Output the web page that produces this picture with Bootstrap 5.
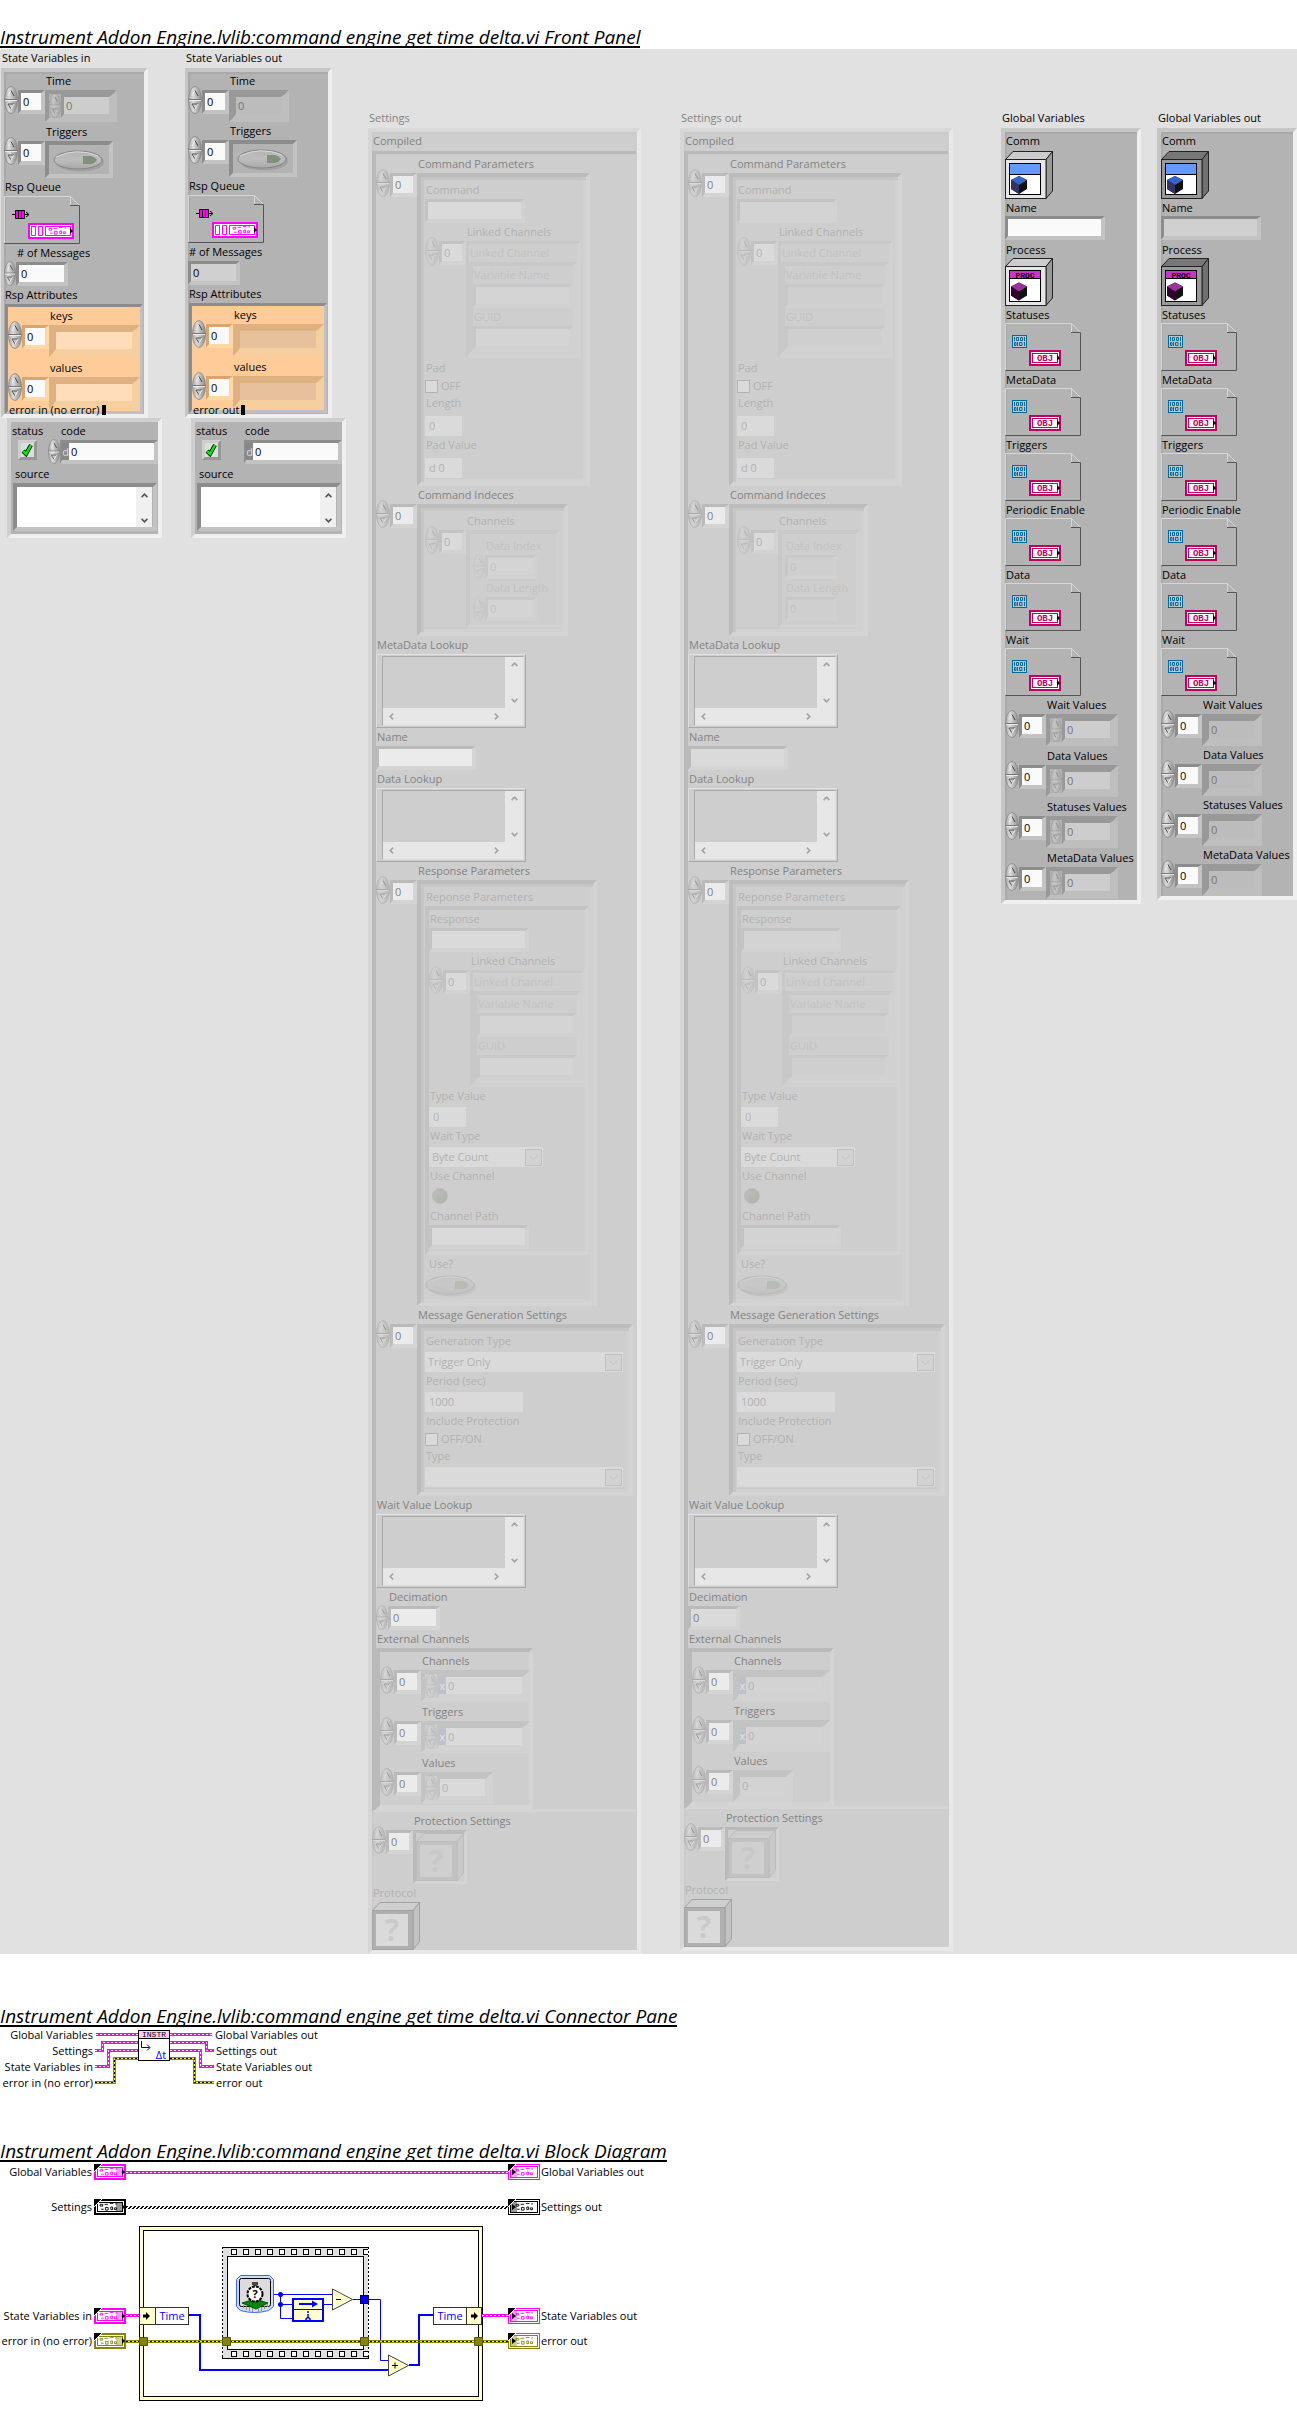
<!DOCTYPE html>
<html lang="en">
<head>
<meta charset="utf-8">
<meta name="viewport" content="width=device-width, initial-scale=1">
<title>command engine get time delta.vi</title>
<link href="https://cdn.jsdelivr.net/npm/bootstrap@5.3.0/dist/css/bootstrap.min.css" rel="stylesheet">
<style>
body{font-family:"Open Sans","Noto Sans",sans-serif;font-size:11px;line-height:18px;color:#000;background:#fff}
.vi-title{font-style:italic;font-size:19px;font-weight:400;line-height:18px;height:20px;border-bottom:2px solid #000;white-space:nowrap;margin:0;width:max-content}
.vi-title.first{margin-top:28px}
.vi-title.second{margin-top:53px}
.vi-title.third{margin-top:45px}
/* front panel */
.fpanel{position:relative;display:grid;grid-template-columns:184fr 184fr 312fr 321fr 156fr 140fr;background:#e1e1e1;margin-top:1px;align-items:start}
.fpanel>section{min-width:0}
.ps-col{padding-left:1px}
.low{padding-top:60px}
.cap{display:block;height:18px;line-height:18px;white-space:nowrap;margin:0;color:var(--ink);padding-left:1px}
.ind-cap{padding-left:42px}
.spin-cap{padding-left:13px}
/* palettes: one per nesting depth */
.pal{--ink:#000;--box:#fafafa;--ibox:#d0d0d0;--lo:#8c8c8c;--hi:#c3c3c3;--sp:1;--face:#e6e6e6;--edge:#333}
.pal-in{--ink:#777;--box:#cdcdcd;--ibox:#bcbcbc;--lo:#999;--hi:#bebebe;--sp:.4}
.pal-or{--lo:#d9a46f;--hi:#ffd8a4;--box:#fafafa}
.pal-or-in{--box:#ffdcba;--ibox:#e6c19b;--lo:#dfb080;--hi:#f6cf9f}
.dim{--ink:#838383;--box:#ebebeb;--ibox:#dadada;--lo:#bababa;--hi:#d4d4d4;--sp:.4}
.dim1{--ink:#b2b2b2;--box:#dadada;--ibox:#d3d3d3;--lo:#c3c3c3;--hi:#d2d2d2;--sp:.2}
.dim2{--ink:#c2c2c2;--box:#d4d4d4;--ibox:#cfcfcf;--lo:#c8c8c8;--hi:#d1d1d1;--sp:.1}
.cluster{border:4px solid;border-color:#c6c6c6 #efefef #efefef #c6c6c6;background:#b3b3b3;box-shadow:inset 2px 2px #a9a9a9}
.cluster.state{border-left-width:3px;width:147px;height:350px}
.cluster.setg{width:273px;background:#cecece;border-color:#d8d8d8 #e8e8e8 #e8e8e8 #d6d6d6;box-shadow:inset 2px 2px #cacaca}
.cluster.glob{width:140px}
.cluster.err{width:155px;height:120px;margin-left:6px;box-shadow:none;border-color:#cfcfcf #efefef #efefef #cfcfcf}
.bev{border:4px solid;border-color:var(--lo) var(--hi) var(--hi) var(--lo)}
.bev3{border-width:3px 4px 4px 3px}
.bev-3{border-width:3px}
.dbl{border:4px solid;border-color:#bcbcbc #d4d4d4 #d4d4d4 #bcbcbc;box-shadow:inset 3px 3px #c6c6c6,inset -3px -3px #d1d1d1;padding:4px}
.fc{display:block;flex:none;font:inherit;line-height:17px;height:24px;border:solid;border-width:3px 4px 4px 3px;border-color:var(--lo) var(--hi) var(--hi) var(--lo);border-radius:0;background:var(--box);color:var(--ink);padding:0 0 0 2px;resize:none}
.fc.ro{background:var(--ibox)}
.w-ix{width:27px}.w-num{width:52px}.w-txt{width:100px}.w-ext{width:80px}.w-code{width:89px}
.flat{display:block;border:0;height:20px;margin-top:2px;padding:0 0 0 4px;background:var(--box);color:var(--ink);line-height:20px}
.low2{margin-top:4px}
.w-37{width:37px}.w-98{width:98px}
.unit{flex:none;display:flex;align-items:center;justify-content:center;height:24px;border:solid;border-width:3px 0 4px 2px;border-color:var(--lo) transparent var(--hi) var(--lo);width:9px;background:#bfc1c8;color:#e4e4e4;line-height:12px}
.unit+.fc{border-left:0}
.unit.dk{background:#888;color:#ddd}
.spb{border:0;background:none;padding:0;display:block;width:14px;height:28px;margin-top:-4px;opacity:var(--sp);flex:none}
.spb.sm{width:12px;height:25px;margin-top:-1px}
.icn{display:block}
.rowgap{margin-bottom:1px}
.orange{background:#fc9;margin-left:1px;width:138px;border:3px solid;border-color:#8c8c8c #c0c0c0 #c0c0c0 #8c8c8c;height:110px}
.rowgap-or{height:52px}
.w-or{width:83px}
.latch{border:0;background:none;padding:0;display:block;width:52px;height:24px}
.latch-f{width:68px;height:37px;display:flex;align-items:center;justify-content:center}
.use-l{opacity:.3;margin-bottom:1px}
.led{display:block;width:16px;height:16px;margin:3px;padding:0;border:1px solid #bbb;border-radius:50%;background:linear-gradient(135deg,#bcc0bb,#adb2aa)}
.err-cap{position:relative;z-index:1;margin-top:-17px;height:17px;padding-left:8px;display:flex;align-items:center}
.cursor{width:4px;height:10px;background:#000;margin-left:2px}
.chk{border:3px solid;border-color:#cecece #969696 #969696 #cecece;background:#ddd;width:19px;height:20px;padding:0;display:block;margin-left:7px}
.nosp{width:12px}
.mt-px{margin-top:1px}
.src{display:flex;width:144px;height:48px;margin-left:2px}
.src textarea{flex:1;min-width:0;border:0;resize:none;padding:0;background:#fff}
.src .sb{width:16px;background:#f0f0f0;display:flex;flex-direction:column;justify-content:space-between;align-items:center;padding:4px 0 2px;margin-right:1px}
.lookup{width:150px;height:74px;border:1px solid;border-color:#e2e2e2 #a9a9a9 #a9a9a9 #dedede;padding:1px 1px 1px 5px}
.lk-in{display:grid;grid-template-columns:1fr 18px;grid-template-rows:1fr 17px;height:100%;border:1px solid;border-color:#a9a9a9 #ddd #ddd #a9a9a9;background:#e7e7e7}
.lk-in textarea{border:0;background:#cecece;resize:none;padding:0;min-width:0;width:100%;height:100%}
.lk-in .v{display:flex;flex-direction:column;justify-content:space-between;align-items:center;padding:3px 0 3px}
.lk-in .h{display:flex;justify-content:space-between;align-items:center;padding:0 4px}
.cbx{width:13px;height:13px;border:1px solid #b4b4b4;background:#dadada;appearance:none;margin:1px 0 0;border-radius:0}
.cb-row{display:flex;gap:3px;height:17px;align-items:center;color:var(--ink);margin:0;line-height:17px}
.cap-gap{margin-top:1px}
.selw{display:grid;height:20px;margin-top:2px;align-items:center}
.selw>*{grid-area:1/1}
.selw select{appearance:none;border:0;border-radius:0;background:var(--box);color:var(--ink);font:inherit;height:20px;padding:0 0 0 3px;opacity:1;width:100%}
.selw svg{justify-self:end;margin-right:1px;pointer-events:none;stroke:#c0c0c0;fill:#d2d2d2}
.w-114{width:114px}.w-198{width:198px}
.cmds{width:173px}.msgs{width:216px;padding-bottom:5px}.resp{width:180px}
.idxs{width:94px;padding:3px}
.idxs.slim{width:82px}
.pb-use{padding-bottom:2px}
.compiled{border-width:3px 0 3px 4px;border-style:solid;border-color:#bababa #d4d4d4 #d4d4d4 #bababa;margin-right:1px}
.pt-px{padding-top:1px}
.ext{width:157px}
.ext.slim{width:146px}
.dg{display:block;max-width:none}
.gl .cap{height:17px;line-height:17px}
.gl .ind-cap,.gl .top-cap{height:18px;line-height:18px}
.mb-cap,.top-cap{margin-bottom:1px}
.mb-cube{margin-bottom:2px}
.cube-dim{--face:#b0b0b0;--edge:#a2a2a2;--scr:#dadada;--q:#cacaca;--top:#cfcfcf;--side:#c2c2c2}
.cube-dim2{--face:#c2c2c2;--edge:#bcbcbc;--scr:#cfcfcf;--q:#c8c8c8;--top:#cdcdcd;--side:#c9c9c9}
.cube-in{--face:#e6e6e6;--edge:#222;--top:#ccc;--side:#999}
.cube-out{--face:#999;--edge:#222;--top:#777;--side:#707070}
.bl{--c1:#36c;--c2:#336}
.pu{--c1:#939;--c2:#303}
</style>
<script src="https://cdn.jsdelivr.net/npm/bootstrap@5.3.0/dist/js/bootstrap.bundle.min.js"></script>
</head>
<body>
<svg width="0" height="0" class="position-absolute" aria-hidden="true">
<defs>
<linearGradient id="metal" x1="0" x2="1" y1="0" y2="0"><stop offset="0" stop-color="#a4a4a4"/><stop offset=".35" stop-color="#dcdcdc"/><stop offset="1" stop-color="#8a8a8a"/></linearGradient>
<linearGradient id="pill" x1="0" x2="0" y1="0" y2="1"><stop offset="0" stop-color="#b4b4b4"/><stop offset=".5" stop-color="#bdbdbd"/><stop offset="1" stop-color="#a8a8a8"/></linearGradient>
<symbol id="spin" viewBox="0 0 14 28" preserveAspectRatio="none"><ellipse cx="7" cy="14" rx="6.5" ry="13.5" fill="url(#metal)" stroke="#888" stroke-width=".8"/><path d="M0.5 13.5h13" stroke="#777"/><path d="M1 14.6h12" stroke="#eee"/><path d="M4 10L7 4.5" stroke="#eee" fill="none"/><path d="M7 4.5L10 10" stroke="#444" fill="none"/><path d="M10 18H4L7 23" stroke="#555" fill="none"/><path d="M7 23L10 18" stroke="#eee"/></symbol>
<symbol id="latch" viewBox="0 0 52 24"><ellipse cx="27" cy="14" rx="24" ry="9.5" fill="#8d8d8d" opacity=".5"/><ellipse cx="25" cy="12" rx="24" ry="9" fill="url(#pill)" stroke="#858585"/><path d="M3 9Q24-1 45 8" stroke="#d8d8d8" fill="none"/><path d="M30 8h8q4 1 6 4-2 3-6 4h-8z" fill="#80917a"/></symbol>
<symbol id="chev" viewBox="0 0 17 17"><rect x=".5" y=".5" width="16" height="16"/><path d="M5 7l3.500 3.500L12 7" fill="none"/></symbol>
<symbol id="cube" viewBox="0 0 48 48"><path d="M.5 8.500L8 .5H47.500L41 8.500z" fill="var(--top)" stroke="var(--edge)"/><path d="M41 8.500L47.500.5V40L41 47.500z" fill="var(--side)" stroke="var(--edge)"/><rect x=".5" y="8.500" width="40.500" height="39" fill="var(--face)" stroke="var(--edge)"/></symbol>
<symbol id="box3" viewBox="0 0 16 18"><path d="M8 0l8 4v9l-8 5-8-5V4z" fill="#111"/><path d="M8 0l8 4-8 5-8-5z" fill="var(--c1)"/><path d="M0 4l8 5v9l-8-5z" fill="var(--c2)"/></symbol>
<symbol id="sheet" viewBox="0 0 76 48"><path d="M.5 47V.5H66.500L75.500 9.500" fill="none" stroke="#d6d6d6"/><path d="M66.500.5V9" stroke="#d6d6d6" fill="none"/><path d="M66 9.500H75.500V47.500H.5" fill="none" stroke="#555"/></symbol>
<symbol id="bits" viewBox="0 0 15 13"><rect x=".5" y=".5" width="14" height="12" fill="#b9c6cc" stroke="#06699c"/><path d="M2.500 2v4M12.500 2v4M5.500 7v4M12.500 7v4" stroke="#06699c"/><path d="M4.500 2.500h2v3h-2zM8.500 2.500h2v3h-2zM2.500 7.500h1.500v3h-1.500zM7.500 7.500h2.500v3h-2.500z" fill="none" stroke="#06699c"/></symbol>
<symbol id="glyphs" viewBox="0 0 22 9"><path d="M1 1.500h3v2h-3zM6 1.500h4M12 .5h4M13 4.500h2v3h-2zM17 5.500h2.500v2h-2.500zM2 7h3M7 5h3v3h-3zM18 1h2" fill="none" stroke="currentColor"/></symbol>
<symbol id="tin" viewBox="0 0 32 16"><rect width="32" height="16" fill="currentColor"/><rect x="2.500" y="2.500" width="27" height="11" fill="#fff" stroke="#fff"/><rect x="3.500" y="3.500" width="25" height="9" fill="#fff" stroke="currentColor"/><use href="#glyphs" x="5" y="4" width="20" height="8"/><rect x="22" y="3" width="7" height="10" fill="currentColor" opacity=".4"/><path d="M28 5l3 3-3 3z" fill="#000"/><path d="M0 0h8L0 8z" fill="#000"/><path d="M8 0L0 8" stroke="#fff"/></symbol>
<symbol id="tout" viewBox="0 0 32 16"><rect x=".5" y=".5" width="31" height="15" fill="#fff" stroke="currentColor"/><rect x="2.500" y="2.500" width="27" height="11" fill="#fff" stroke="currentColor"/><use href="#glyphs" x="7" y="4" width="20" height="8"/><rect x="3" y="3" width="6" height="10" fill="currentColor" opacity=".4"/><path d="M4 5l4 3-4 3z" fill="#000"/><path d="M0 0h8L0 8z" fill="#000"/><path d="M8 0L0 8" stroke="#fff"/></symbol>
</defs>
</svg>

<h2 class="vi-title first">Instrument Addon Engine.lvlib:command engine get time delta.vi Front Panel</h2>
<main class="fpanel" id="front"></main>

<h2 class="vi-title second">Instrument Addon Engine.lvlib:command engine get time delta.vi Connector Pane</h2>
<svg class="dg" width="664" height="70" viewBox="0 2029 664 70" role="img" aria-label="Connector pane">
<g fill="none" stroke-width="3">
<path d="M96 2036.500H138M95 2052.500H102.500V2044.500H138M95 2068.500H108.500V2052.500H138M170 2036.500H212M170 2044.500H206.500V2052.500H214M170 2052.500H200.500V2068.500H214" stroke="#f0f"/>
<path d="M96 2036.500H138M95 2052.500H102.500V2044.500H138M95 2068.500H108.500V2052.500H138M170 2036.500H212M170 2044.500H206.500V2052.500H214M170 2052.500H200.500V2068.500H214" stroke="#fff" stroke-width="1" stroke-dasharray="2 2"/>
<path d="M95 2084.500H114.500V2060.500H138M170 2060.500H194.500V2084.500H214" stroke="#84840a"/>
<path d="M95 2084.500H114.500V2060.500H138M170 2060.500H194.500V2084.500H214" stroke="#ff0" stroke-width="1"/>
<path d="M95 2084.500H114.500V2060.500H138M170 2060.500H194.500V2084.500H214" stroke="#000" stroke-width="1" stroke-dasharray="2 2"/>
</g>
<rect x="138.500" y="2032.500" width="31" height="30" fill="#fff" stroke="#000"/><rect x="139" y="2033" width="30" height="7" fill="#fcf"/><path d="M139 2040.500h30" stroke="#000"/>
<text x="154" y="2039" font-size="8" font-family="Liberation Mono,monospace" text-anchor="middle">INSTR</text>
<path d="M141.500 2043v6.500h8M147 2046.500l3 3-3 3" fill="none" stroke="#00a"/>
<text x="161" y="2061" font-size="11" fill="#00f" text-anchor="middle">Δt</text>
<g text-anchor="end"><text x="93" y="2041">Global Variables</text><text x="93" y="2057">Settings</text><text x="93" y="2073">State Variables in</text><text x="93" y="2089">error in (no error)</text></g>
<text x="215" y="2041">Global Variables out</text><text x="216" y="2057">Settings out</text><text x="216" y="2073">State Variables out</text><text x="216" y="2089">error out</text>
</svg>

<h2 class="vi-title third">Instrument Addon Engine.lvlib:command engine get time delta.vi Block Diagram</h2>
<svg class="dg" width="664" height="250" viewBox="0 2165 664 250" role="img" aria-label="Block diagram">
<g text-anchor="end"><text x="92" y="2179">Global Variables</text><text x="92" y="2214">Settings</text><text x="92" y="2323">State Variables in</text><text x="92" y="2348">error in (no error)</text></g>
<text x="541" y="2179">Global Variables out</text><text x="541" y="2214">Settings out</text><text x="541" y="2323">State Variables out</text><text x="541" y="2348">error out</text>
<path d="M126 2175.500H508" stroke="#f0f" stroke-width="3"/><path d="M126 2175.500H508" stroke="#fff" stroke-dasharray="2 2"/>
<path d="M126 2209.500H508" stroke="#000" stroke-dasharray="2 2"/><path d="M125 2210.500H508" stroke="#000" stroke-dasharray="2 2"/><path d="M124 2211.500H508" stroke="#000" stroke-dasharray="2 2"/>
<rect x="139.500" y="2229.500" width="343" height="174" fill="#ffc" stroke="#000"/><rect x="143.500" y="2233.500" width="335" height="166" fill="#fff" stroke="#000"/>
<rect x="222.500" y="2250.500" width="146" height="111" fill="#e0e0e0" stroke="#000"/><path d="M222.500 2252v108M368.500 2252v108" stroke="#fff" stroke-dasharray="2 2"/>
<g fill="none"><path d="M231 2255H368M231 2357H368" stroke="#000" stroke-width="6" stroke-dasharray="6 6"/><path d="M232 2255H368M232 2357H368" stroke="#fff" stroke-width="4" stroke-dasharray="4 8"/></g>
<rect x="227.500" y="2259.500" width="136" height="93" fill="#fff" stroke="#000"/>
<path d="M126 2318.500h14M482 2318.500h26" stroke="#f0f" stroke-width="3"/><path d="M126 2318.500h14M482 2318.500h26" stroke="#fff" stroke-dasharray="2 2"/>
<g fill="none" stroke="#00f"><path d="M189 2318H200V2373H388M409 2368H419V2318H433" stroke-width="2"/><path d="M274 2297.500H333M280.500 2297.500V2321.500H292M280.500 2307.500H292M324 2307.500H333M353 2302.500H380.500V2363.500H389"/></g>
<path d="M126 2344.500H508" stroke="#84840a" stroke-width="3"/><path d="M126 2344.500H508" stroke="#ff0"/><path d="M126 2344.500H508" stroke="#000" stroke-dasharray="2 2"/>
<g fill="#84840a" stroke="#55550a"><path d="M139.500 2340.500h8v8h-8zM222.500 2340.500h8v8h-8zM360.500 2340.500h8v8h-8zM474.500 2340.500h8v8h-8z"/></g>
<rect x="360.500" y="2298.500" width="8" height="8" fill="#00f" stroke="#004"/>
<circle cx="280.500" cy="2297.500" r="2.500" fill="#00f"/><circle cx="280.500" cy="2307.500" r="2.500" fill="#00f"/>
<path d="M332.500 2292v21l20-10.500zM388.500 2358v21l20-10.500z" fill="#ffc" stroke="#444"/>
<path d="M336 2302.500h5M392 2368.500h6M395 2365.500v6" stroke="#000"/>
<rect x="293" y="2302" width="30" height="22" fill="#ffc" stroke="#00f" stroke-width="2"/><path d="M293 2312.500h30" stroke="#00f"/><path d="M299 2307h14" stroke="#00f" stroke-width="2"/><path d="M312 2303.500l6 3.500-6 3.500z" fill="#00f"/><path d="M308 2314v2M308 2317v3M306 2324v-2l2-2 2 2v2" fill="none" stroke="#00f" stroke-width="1.500"/>
<path d="M240.500 2278.500h29l4 4v27l-5 4q-14 4-28 0l-4-4v-27z" fill="#cdf" stroke="#36f"/><rect x="239.500" y="2281.500" width="31" height="28" rx="2" fill="#dcdcdc" stroke="#000"/>
<path d="M242 2306l13-4 13 4-12 6z" fill="#080" stroke="#052"/><path d="M243.500 2308v3M246.500 2309v4M249.500 2310v4M252.500 2311v4M258.500 2311v4M261.500 2310v4M264.500 2308v4M267.500 2307v3" stroke="#995"/>
<path d="M252 2286.500h6M255 2286v3" stroke="#444" stroke-width="3"/><circle cx="255" cy="2297" r="7.500" fill="#fff" stroke="#000" stroke-width="2" stroke-dasharray="3 1"/><text x="255" y="2301" font-size="11" font-weight="700" text-anchor="middle">?</text>
<g stroke="#333"><rect x="139.500" y="2310.500" width="16" height="17" fill="#ffc"/><rect x="155.500" y="2310.500" width="33" height="17" fill="#fff"/><rect x="433.500" y="2310.500" width="33" height="17" fill="#fff"/><rect x="466.500" y="2310.500" width="15" height="17" fill="#ffc"/></g>
<path d="M143 2317.500h3v-2.500l4 4-4 4v-2.500h-3zM471 2317.500h3v-2.500l4 4-4 4v-2.500h-3z" fill="#000"/>
<g fill="#00f" font-size="11" text-anchor="middle"><text x="172" y="2323">Time</text><text x="450" y="2323">Time</text></g>
<g color="#f0f"><use href="#tin" x="94" y="2167" width="32" height="16"/><use href="#tout" x="508" y="2167" width="32" height="16"/><use href="#tin" x="94" y="2311" width="32" height="16"/><use href="#tout" x="508" y="2311" width="32" height="16"/></g>
<g color="#000"><use href="#tin" x="94" y="2202" width="32" height="16"/><use href="#tout" x="508" y="2202" width="32" height="16"/></g>
<g color="#84840a"><use href="#tin" x="94" y="2336" width="32" height="16"/><use href="#tout" x="508" y="2336" width="32" height="16"/></g>
</svg>

<script>
// Small builders for the front panel widgets. `out` marks an indicator (no stepper, read-only).
let seq = 0;
const nid = () => 'c' + (++seq);
const spin = (sm = '') => `<button type="button" class="spb ${sm}" aria-label="Step value"><svg class="icn" width="100%" height="100%"><use href="#spin"/></svg></button>`;
const ro = out => out ? 'ro" readonly' : '"';
const gap = out => out ? '' : 'rowgap';
const inp = (id, w, out, v = '') => `<input type="text" id="${id}" class="fc ${w} ${ro(out)} value="${v}">`;
const text = (name, out) => { const id = nid(); return `<label class="cap" for="${id}">${name}</label>${inp(id, 'w-txt', out)}`; };
const num = (name, out) => { const id = nid(); return `<label class="cap ${out ? '' : 'spin-cap'}" for="${id}">${name}</label><div class="d-flex">${out ? '' : spin('sm')}${inp(id, 'w-num', out, '0')}</div>`; };
const arr = (name, frame) => `<div class="cap ind-cap">${name}</div><div class="d-flex align-items-start">${spin()}<input type="text" class="fc w-ix" value="0" aria-label="${name} index">${frame}</div>`;
const numArr = (name, out, pal, unit) => arr(name, `<div class="bev ${gap(out)} ${pal}"><div class="d-flex">${out ? '' : spin('sm')}${unit ? `<span class="unit">x</span>` : ''}<input type="text" class="fc ${unit ? 'w-ext' : 'w-num'} ${ro(out)} value="0" aria-label="${name} element"></div></div>`);
const orArr = (name, out) => `<div class="rowgap-or">${arr(name, `<div class="bev pal-or-in"><input type="text" class="fc w-or ${ro(out)} aria-label="${name} element"></div>`)}</div>`;
const latch = c => `<button type="button" class="latch ${c}" aria-label="Toggle"><svg class="icn" width="52" height="24"><use href="#latch"/></svg></button>`;
const arrow = (rot, col) => `<svg class="icn" width="9" height="9" viewBox="-1 -1.500 11 9" stroke="${col}"><g transform="rotate(${rot} 4.500 3)"><path d="M1 5L4.500 1.500L8 5" fill="none" stroke-width="2"/></g></svg>`;
const lookup = name => { const id = nid(); return `<label class="cap" for="${id}">${name}</label><div class="lookup"><div class="lk-in"><textarea id="${id}" readonly></textarea><div class="v">${arrow(0, '#a4a4a4')}${arrow(180, '#a4a4a4')}</div><div class="h">${arrow(-90, '#a4a4a4')}${arrow(90, '#a4a4a4')}</div></div></div>`; };
const flat = (name, w, v) => { const id = nid(); return `<label class="cap" for="${id}">${name}</label><input type="text" id="${id}" class="flat ${w}" value="${v}">`; };
const tick = (name, t) => `<div class="cap">${name}</div><label class="cb-row"><input type="checkbox" class="cbx">${t}</label>`;
const sel = (name, w, v) => { const id = nid(); return `<label class="cap" for="${id}">${name}</label><div class="selw ${w}"><select id="${id}"><option>${v}</option></select><svg width="17" height="17"><use href="#chev"/></svg></div>`; };
const linked = out => arr('Linked Channels', `<div class="bev bev3 dim2"><div class="cap">Linked Channel</div><div class="bev">${text('Variable Name', out)}${text('GUID', out)}</div></div>`);
const cube = (cls, inner) => `<svg class="icn ${cls}" width="48" height="48" viewBox="0 0 48 48"><use href="#cube" width="48" height="48"/>${inner}</svg>`;
const qcube = cls => cube(cls, `<rect x="4" y="12" width="32" height="32" fill="var(--scr)"/><text x="20" y="39" font-size="30" font-weight="700" text-anchor="middle" fill="var(--q)">?</text>`);
const sheet = inner => `<svg class="icn" width="76" height="48" viewBox="0 0 76 48"><use href="#sheet" width="76" height="48"/>${inner}</svg>`;

const queue = sheet(`<path d="M8 18.500h3M21 18.500h3M22 16l3 2.500-3 2.500" fill="none" stroke="#000"/><path d="M11.500 14.500h9v8h-9zM14.500 14.500v8M17.500 14.500v8" fill="#f0f" stroke="#000"/><rect x="25" y="28" width="44" height="14" fill="#fff" stroke="#f0f" stroke-width="2"/><path d="M27.500 30.500h4v9h-4zM34.500 30.500h4v9h-4zM41.500 30.500h25v9h-25z" fill="none" stroke="#f0f"/><g color="#f0f"><use href="#glyphs" x="44" y="31" width="20" height="8"/></g><path d="M66 32l3 3-3 3z"/>`);
const obj = sheet(`<use href="#bits" x="7" y="12" width="15" height="13"/><rect x="25" y="28" width="30" height="14" fill="#fff" stroke="#c00062" stroke-width="2"/><rect x="27.500" y="30.500" width="25" height="9" fill="#fff" stroke="#c00062"/><text x="40" y="38" font-size="9" font-weight="700" font-family="Liberation Mono,monospace" text-anchor="middle" fill="#c00062">OBJ</text><path d="M52 32l3 3-3 3z"/>`);

const err = (name, out) => {
  const a = nid(), b = nid();
  return `<div class="err-cap pal">${name}<span class="cursor"></span></div>
  <div class="cluster err pal"><div class="d-flex"><div><div class="cap">status</div><button type="button" class="chk" aria-label="status"><svg class="icn" width="13" height="14"><path d="M2 8l3 3 5-9" fill="none" stroke="#000" stroke-width="4"/><path d="M2 8l3 3 5-9" fill="none" stroke="#0e0" stroke-width="2.500"/></svg></button></div>
  <div class="ms-auto"><label class="cap spin-cap" for="${a}">code</label><div class="d-flex">${out ? '<span class="nosp"></span>' : spin('sm')}<span class="unit dk">d</span><input type="text" id="${a}" class="fc w-code" value="0"></div></div></div>
  <label class="cap ps-1 mt-px" for="${b}">source</label><div class="bev src"><textarea id="${b}"></textarea><div class="sb">${arrow(0, '#555')}${arrow(180, '#555')}</div></div></div>`;
};

const state = (s, out) => `<section class="ps-col"><div class="pal"><div class="cap mb-cap">State Variables ${s}</div><div class="cluster state">
  ${numArr('Time', out, 'pal-in')}
  ${arr('Triggers', `<div class="bev latch-f">${latch('')}</div>`)}
  <div class="cap">Rsp Queue</div>${queue}
  ${num('# of Messages', out)}
  <div class="cap">Rsp Attributes</div>
  <div class="orange pal-or">${orArr('keys', out)}${orArr('values', out)}</div>
  </div></div>${err(out ? 'error out' : 'error in (no error)', out)}</section>`;

const settings = (title, out) => `<section class="low pal dim"><div class="cap">${title}</div><div class="cluster setg mt-px">
  <div class="cap">Compiled</div>
  <div class="compiled mt-px pt-px">
  ${arr('Command Parameters', `<div class="dbl cmds dim1">${text('Command', out)}${linked(out)}<div class="cap-gap">${tick('Pad', 'OFF')}</div>${flat('Length', 'w-37 low2', '0')}${flat('Pad Value', 'w-37 low2', 'd 0')}</div>`)}
  ${arr('Command Indeces', `<div class="dbl dim1">${arr('Channels', `<div class="bev dim2 idxs ${out ? 'slim' : ''}">${num('Data Index', out)}${num('Data Length', out)}</div>`)}</div>`)}
  ${lookup('MetaData Lookup')}
  ${text('Name', out)}
  ${lookup('Data Lookup')}
  ${arr('Response Parameters', `<div class="dbl resp dim1"><div class="cap">Reponse Parameters</div><div class="bev pb-use">${text('Response', out)}${linked(out)}${flat('Type Value', 'w-37', '0')}${sel('Wait Type', 'w-114', 'Byte Count')}<div class="cap">Use Channel</div><button type="button" class="led" aria-label="Use Channel"></button>${text('Channel Path', out)}</div><div class="cap ps-1">Use?</div>${latch('use-l')}</div>`)}
  ${arr('Message Generation Settings', `<div class="dbl msgs dim1">${sel('Generation Type', 'w-198', 'Trigger Only')}${flat('Period (sec)', 'w-98', '1000')}${tick('Include Protection', 'OFF/ON')}${sel('Type', 'w-198', '')}</div>`)}
  ${lookup('Wait Value Lookup')}
  ${num('Decimation', out)}
  <div class="cap">External Channels</div>
  <div class="bev ext ${out ? 'slim' : ''}">${numArr('Channels', out, 'dim1', 1)}${numArr('Triggers', out, 'dim1', 1)}${numArr('Values', out, 'dim1')}</div>
  </div>
  ${arr('Protection Settings', `<div class="bev bev-3">${qcube('cube-dim2')}</div>`)}
  <div class="cap dim1">Protocol</div>${qcube('cube-dim')}
  </div></section>`;

const globals = (title, out) => {
  const c = out ? 'cube-out' : 'cube-in';
  const screen = '<rect x="4.500" y="12.500" width="31" height="31" fill="#fff" stroke="#000"/>';
  return `<section class="low pal gl"><div class="cap top-cap">${title}</div><div class="cluster glob">
  <div class="cap mb-cube">Comm</div>${cube(c, screen + '<rect x="5" y="13" width="30" height="10" fill="#69f"/><path d="M4 23.500h32" stroke="#000"/><use href="#box3" x="6" y="25" width="16" height="18" class="bl"/>')}
  ${text('Name', out)}
  <div class="cap mt-px">Process</div>${cube(c, screen + '<rect x="5" y="13" width="30" height="7" fill="#c3c"/><path d="M4 20.500h32" stroke="#000"/><text x="20" y="19.500" font-size="8" font-weight="700" font-family="Liberation Mono,monospace" text-anchor="middle">PROC</text><use href="#box3" x="6" y="24" width="16" height="19" class="pu"/>')}
  ${['Statuses', 'MetaData', 'Triggers', 'Periodic Enable', 'Data', 'Wait'].map(n => `<div class="cap">${n}</div>${obj}`).join('')}
  ${['Wait', 'Data', 'Statuses', 'MetaData'].map(n => numArr(n + ' Values', out, 'pal-in')).join('')}
  </div></section>`;
};

document.getElementById('front').innerHTML =
  state('in', false) + state('out', true) +
  settings('Settings', false) + settings('Settings out', true) +
  globals('Global Variables', false) + globals('Global Variables out', true);
</script>
</body>
</html>
